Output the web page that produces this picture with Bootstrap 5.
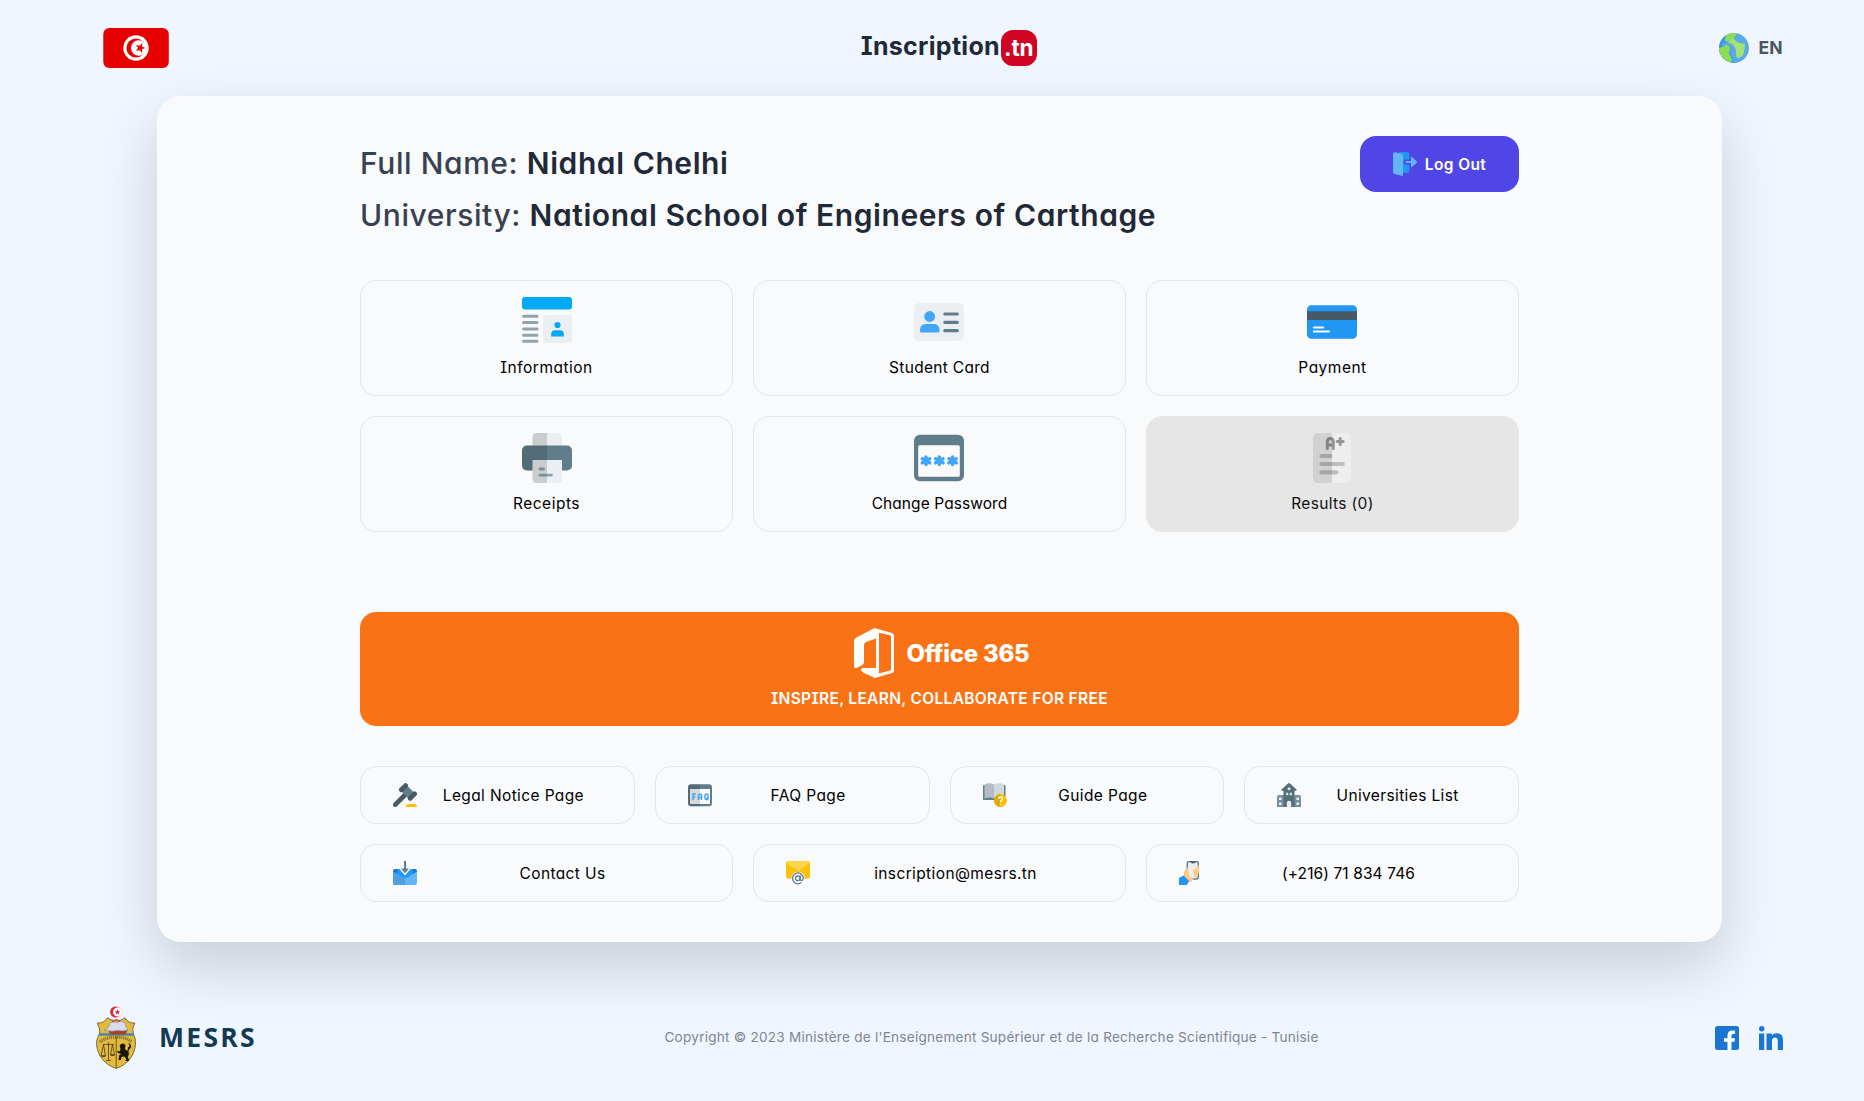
<!DOCTYPE html>
<html lang="en">
<head>
<meta charset="utf-8">
<meta name="viewport" content="width=device-width, initial-scale=1">
<title>Inscription.tn</title>
<link href="https://cdn.jsdelivr.net/npm/bootstrap@5.3.0/dist/css/bootstrap.min.css" rel="stylesheet">
<style>
  body{font-family:Inter,"Open Sans",sans-serif;font-feature-settings:"cv11","cv08";background:#eff6ff;color:#000;height:1101px;overflow:hidden;padding:0 81px 0 96px}
  svg{display:block;flex:none}
  a{color:inherit;text-decoration:none}
  .topbar{height:96px}
  .site-flag{margin-left:7px}
  .brand-name{width:140px;font-size:25px;font-weight:700;line-height:34px;letter-spacing:.3px;color:#1f2937;margin-bottom:4px}
  .brand-badge{width:36px;height:36px;border-radius:12px;background:#d00524;color:#fff;font-size:22.5px;font-weight:700;letter-spacing:-.2px;line-height:35px}
  .brand-block{margin-left:9px}
  .lang-switch{font-size:17.5px;font-weight:700;color:#4b5563;letter-spacing:.3px;gap:9px}
  .panel{height:846px;margin:0 61px;border-radius:24px;background:#f9fafc;padding:40px 203px;box-shadow:0 25px 60px rgba(0,0,0,.165)}
  .intro{height:144px}
  .intro-line{font-size:30px;line-height:52px;font-weight:500;color:#374151;letter-spacing:.58px;white-space:nowrap}
  .intro-line b{font-weight:600;color:#1f2937}
  .logout{width:159px;height:56px;border-radius:16px;background:#4f46e5;color:#fff;font-size:15.5px;font-weight:600;letter-spacing:.4px;gap:8px}
  .logout span,.tile span,.office-title span,.pill span,.intro-line{padding-top:1px}
  .intro-line{height:52px}
  .grid{gap:20px}
  .tile{flex:1 1 0;height:116px;border:1px solid #e5e7eb;border-radius:16px;padding:16px;font-size:15.5px;line-height:24px;letter-spacing:.5px;gap:8px}
  .tile+.tile svg{margin-right:1px}
  .tile-off{background:#e6e6e6;border-color:#e6e6e6;color:#111}
  .office{height:114px;margin:80px 0 40px;border-radius:16px;background:#f97316;color:#fff;padding:16px;gap:8px}
  .office-title{font-size:24px;font-weight:800;letter-spacing:-.25px;gap:13px;margin-left:4px}
  .office-sub{font-size:15.5px;line-height:26px;font-weight:600;letter-spacing:.33px}
  .pill{flex:1 1 0;height:58px;border:1px solid #e5e7eb;border-radius:16px;padding:0 32px;gap:8px;font-size:15.5px;letter-spacing:.38px;white-space:nowrap}
  .tight{letter-spacing:.1px}
  .bottombar{height:159px;padding-top:32px}
  .ministry{width:172px;gap:23px;font-family:"Open Sans",sans-serif;font-weight:700;font-size:26.5px;letter-spacing:2.3px;color:#123a52}
  .copy{font-size:13.6px;color:#80858d;letter-spacing:.225px;white-space:nowrap}
  .socials{gap:20px}
</style>
</head>
<body>
<header class="topbar d-flex justify-content-between align-items-center">
  <svg class="site-flag" width="66" height="40" viewBox="0 0 66 40"><rect x=".3" width="65.500" height="40" rx="6" fill="#e60000"/><circle cx="33" cy="20" r="12.700" fill="#fff"/><circle cx="33" cy="20" r="9.600" fill="#e60000"/><circle cx="35.800" cy="20" r="7.800" fill="#fff"/><path d="M38.600 16.400l-.1 2.600 2.500.9-2.500.9.1 2.700-1.700-2.100-2.600.7 1.500-2.200-1.500-2.200 2.600.8z" fill="#e60000" stroke="#e60000" stroke-width="1.100"/></svg>
  <a href="#" class="brand-block d-flex align-items-center"><span class="brand-name">Inscription</span><span class="brand-badge text-center">.tn</span></a>
  <a href="#" class="lang-switch d-flex align-items-center">
    <svg width="30" height="30" viewBox="0 0 30 30"><defs><clipPath id="globe"><circle cx="15" cy="15" r="15"/></clipPath></defs><g clip-path="url(#globe)"><path d="M0 0h30v30H0z" fill="#5aaae7"/><path d="M0 0h7l1 8 5 4-1 8 4 10H0z" fill="#3f98e2"/><path d="M6 7l1-5 5-2h5.500l-.8 3c-2 2-4 3-6 4.200C9 8.300 6 9.500 6 7zM0 15l3.500-1C5 12 9 11 11 14c1 2-1 4-1 6s3 5 3 7l-.5 3H0z" fill="#8edb57"/><path d="M9 9l5-4.500c3 5 7 6 12 6.500-.2 4-.8 8-2.200 12l-5.300 2.600C16 23 17 20 17 17c-.5-3-3-5-8-5z" fill="#a4e273"/><path d="M3 11c4-2 7-2 9.500 0 3.500 2 4.500 6 4.500 10s2 7 4 9h-6c-1-4-3-7-3.500-10 0-3 1.500-5-.5-7-2-1.700-5-1.200-8 1z" fill="#5aaae7"/></g></svg>
    <span>EN</span></a>
</header>

<main class="panel">
  <div class="intro d-flex justify-content-between align-items-start">
    <div><div class="intro-line">Full Name: <b>Nidhal Chelhi</b></div><div class="intro-line">University: <b>National School of Engineers of Carthage</b></div></div>
    <a href="#" class="logout d-flex align-items-center justify-content-center">
      <svg width="24" height="24" viewBox="0 0 24 24"><path d="M6 0h8.300a2 2 0 0 1 2 2v5.500H13a2.500 2.500 0 0 0 0 5h3.300V19a2 2 0 0 1-2 2H6z" fill="#2196f3"/><path d="M2 .2l6.500 1.600Q10 2.200 10 3.700V24l-8.500-2Q0 21.500 0 20V2Q0 0 2 .2z" fill="#64b5f6"/><path d="M13 9h5V5.500q.2-1 1-.5l4.700 4.300q.6.700 0 1.400L19 15q-.8.500-1-.5V11h-5q-1-1 0-2z" fill="#64b5f6"/></svg>
      <span>Log Out</span></a>
  </div>

  <div class="grid d-flex flex-column">
    <div class="grid d-flex">
      <a href="#" class="tile d-flex flex-column align-items-center">
        <svg width="50" height="50" viewBox="0 0 50 50"><rect width="50" height="12.500" rx="3" fill="#03a9f4"/><path d="M1.500 19.300h13.500M1.500 25.600h13.500M1.500 31.900h13.500M1.500 38.200h13.500M1.500 44.300h13.500" stroke="#90a4ae" stroke-width="3" stroke-linecap="round"/><rect x="21" y="18" width="29" height="28" rx="3" fill="#eceff1"/><circle cx="35.500" cy="28" r="3.100" fill="#03a9f4"/><path d="M29.200 39.500v-2q0-4.200 4-4.200h4.600q4 0 4 4.200v2z" fill="#03a9f4"/></svg>
        <span>Information</span></a>
      <a href="#" class="tile d-flex flex-column align-items-center" style="letter-spacing:.3px">
        <svg width="50" height="50" viewBox="0 0 50 50"><rect y="6" width="50" height="38" rx="5" fill="#eceff1"/><circle cx="15.700" cy="19.500" r="5.400" fill="#42a5f5"/><path d="M6 34v-1.500Q6.500 27 12 27h7.500q5.500 0 6 5.500V34q0 1.500-1.500 1.500H7.500Q6 35.500 6 34z" fill="#42a5f5"/><path d="M30.800 17h12.500M30.800 25.300h12.500M30.800 33.700h12.500" stroke="#607d8b" stroke-width="3.200" stroke-linecap="round"/></svg>
        <span>Student Card</span></a>
      <a href="#" class="tile d-flex flex-column align-items-center">
        <svg width="50" height="50" viewBox="0 0 50 50"><rect y="8.300" width="50" height="33.500" rx="4.500" fill="#2196f3"/><path d="M0 14.300h50V23H0z" fill="#455a64"/><path d="M7 30.500h9M7 34.500h15" stroke="#fff" stroke-width="2.200" stroke-linecap="round"/></svg>
        <span>Payment</span></a>
    </div>
    <div class="grid d-flex">
      <a href="#" class="tile d-flex flex-column align-items-center">
        <svg width="50" height="50" viewBox="0 0 50 50"><rect x="10.500" width="29.500" height="20" rx="4" fill="#eceff1"/><rect y="12.500" width="50" height="25" rx="5" fill="#607d8b"/><path d="M10.500 27H40v19q0 4-4 4H14.500q-4 0-4-4z" fill="#eceff1"/><path d="M18 36h3.500M18 42.200h11.500" stroke="#90a4ae" stroke-width="2.800" stroke-linecap="round"/><path d="M25 0v50H14.500q-4 0-4-4v-8.500H5q-5 0-5-5v-15q0-5 5-5h5.500V4q0-4 4-4z" fill="#000" opacity=".14"/></svg>
        <span>Receipts</span></a>
      <a href="#" class="tile d-flex flex-column align-items-center" style="letter-spacing:.08px">
        <svg width="50" height="50" viewBox="0 0 50 50"><rect y="1.700" width="50" height="46.500" rx="6" fill="#607d8b"/><rect x="4.200" y="12.300" width="41.600" height="31.500" rx="1.500" fill="#fafafa"/><g stroke="#42a5f5" stroke-width="3.500" stroke-linecap="round"><path id="ast" d="M12 24v7.600M8.300 25.800l7.400 4M15.700 25.800l-7.400 4"/><use href="#ast" x="13.300"/><use href="#ast" x="26.600"/></g></svg>
        <span>Change Password</span></a>
      <a href="#" class="tile tile-off d-flex flex-column align-items-center" style="letter-spacing:.35px">
        <svg width="50" height="50" viewBox="0 0 50 50"><rect x="6" width="38" height="50" rx="5" fill="#eee"/><path d="M14.500 23h9M14.500 31h21.200M14.500 39.300h15" stroke="#bdbdbd" stroke-width="4.200" stroke-linecap="round"/><path d="M20.300 15.500V9q0-3.500 3-3.500t3 3.500v6.500M20.300 12h6" stroke="#969696" stroke-width="3" fill="none" stroke-linecap="round"/><path d="M33.200 5.500v6M30.200 8.500h6" stroke="#969696" stroke-width="3" stroke-linecap="round"/><path d="M25 0v50H11q-5 0-5-5V5q0-5 5-5z" fill="#000" opacity=".12"/></svg>
        <span>Results (0)</span></a>
    </div>
  </div>

  <a href="#" class="office d-flex flex-column align-items-center">
    <div class="office-title d-flex align-items-center">
      <svg width="40" height="50" viewBox="0 0 40 50"><path fill="#fff" fill-rule="evenodd" d="M20.500 0L38 5q2 .8 2 3v34.500q0 2-2 2.500l-17 5-12-5.500q-3-2-1-4.500h14V10.500l-10 3.500q-2 .8-2 3v17q0 2-2 3.200l-4.500 2.300Q0 41 0 38V13q0-2 2-3.300zM25 4.800v40.700L36 42.500q1-.4 1-1.500V8.500q0-1-1-1.300z"/></svg>
      <span>Office 365</span></div>
    <div class="office-sub">INSPIRE, LEARN, COLLABORATE FOR FREE</div>
  </a>

  <div class="grid d-flex flex-column">
    <div class="grid d-flex">
      <a href="#" class="pill d-flex align-items-center">
        <svg width="24" height="24" viewBox="0 0 24 24"><path d="M2.300 21.700L12 12" stroke="#455a64" stroke-width="4.600" stroke-linecap="round"/><path d="M8 8l6-5.500 8 8-6 5.500z" fill="#607d8b"/><path d="M8.400 6.800l4.200-4.200M17.200 15.300l4.400-4.400" stroke="#455a64" stroke-width="4.800" stroke-linecap="round"/><path d="M12.800 24q0-3 2.700-3h5.800q2.700 0 2.700 3z" fill="#ffc107"/></svg>
        <span class="flex-fill text-center">Legal Notice Page</span></a>
      <a href="#" class="pill d-flex align-items-center">
        <svg width="24" height="24" viewBox="0 0 24 24"><rect y="1.200" width="24" height="22" rx="3" fill="#607d8b"/><path d="M2 6h20v15H2z" fill="#fafafa"/><path d="M12 1.200v22H3q-3 0-3-3v-16q0-3 3-3z" fill="#000" opacity=".13"/><g fill="none" stroke="#42a5f5" stroke-width="1.500"><path d="M5 17v-6h3M5 14h2.500M10.500 17v-4.500q0-1.500 1.500-1.500t1.500 1.500V17M10.500 14.500h3M17 12.300q0-1.300 1.500-1.300t1.500 1.300v2.900q0 1.300-1.500 1.300T17 15.200zM18.500 15l1.800 2"/></g></svg>
        <span class="flex-fill text-center">FAQ Page</span></a>
      <a href="#" class="pill d-flex align-items-center">
        <svg width="24" height="24" viewBox="0 0 24 24"><path d="M0 3q0-1 1-1h20.500q1 0 1 1v14H0z" fill="#607d8b"/><path d="M1.500 1.500Q6-1 11 1.500v14Q6 13.500 1.500 15.500z" fill="#b3bcc2"/><path d="M11 1.500q5-2.500 10 0v14q-5-2-10 0z" fill="#cfd8dc"/><circle cx="17.500" cy="17.500" r="6.500" fill="#ffc107"/><path d="M17.500 11a6.500 6.500 0 0 0 0 13z" fill="#dfa906"/><path d="M15.700 15.700q0-1.700 1.800-1.700t1.800 1.600-1.800 2.900v.8M17.500 20.700v1.100" fill="none" stroke="#fff" stroke-width="1.400"/></svg>
        <span class="flex-fill text-center">Guide Page</span></a>
      <a href="#" class="pill d-flex align-items-center">
        <svg width="24" height="24" viewBox="0 0 24 24"><path d="M0 14q0-2 2-2h20q2 0 2 2v10H0z" fill="#78909c"/><path d="M6.500 8L4.500 7.500Q4 6.500 5 6l6-5.500q1-.8 2 0L19 6q1 .5.500 1.500L17.500 8v16h-11z" fill="#546e7a"/><circle cx="12" cy="5.700" r="1.500" fill="#dfe5e8"/><path d="M9.200 9.800h2v2.400h-2zM12.800 9.800h2v2.400h-2zM9.800 24v-4.500q0-1.800 2.200-1.800t2.200 1.800V24zM2 14.500h2.500V17H2zM2 19.500h2.500V22H2zM19.500 14.500H22V17h-2.500zM19.500 19.500H22V22h-2.500z" fill="#eceff1"/></svg>
        <span class="flex-fill text-center">Universities List</span></a>
    </div>
    <div class="grid d-flex">
      <a href="#" class="pill d-flex align-items-center">
        <svg width="24" height="24" viewBox="0 0 24 24"><path d="M0 10q0-2 2-2h20q2 0 2 2v4L12 21 0 14z" fill="#1976d2"/><path d="M4 8h16v5l-8 5-8-5z" fill="#2196f3"/><path d="M6.500 8h11l-5.500 6.500z" fill="#f9fafc"/><path d="M0 10.500L9 16q3 1.700 6 0l9-5.500V22q0 2-2 2H2q-2 0-2-2z" fill="#64b5f6"/><path d="M0 10.500L9 16q1.500.9 3 .9V24H2q-2 0-2-2z" fill="#4f9fe0"/><path d="M12 0v9" stroke="#607d8b" stroke-width="2"/><path d="M8 7.500h8l-3.300 4q-.7.700-1.400 0z" fill="#607d8b"/></svg>
        <span class="flex-fill text-center">Contact Us</span></a>
      <a href="#" class="pill d-flex align-items-center">
        <svg width="24" height="24" viewBox="0 0 24 24"><rect width="24" height="17.500" rx="2" fill="#ffc107"/><path d="M0 2q0-2 2-2h20q2 0 2 2L13.500 9q-1.500.9-3 0z" fill="#ffd54f"/><path d="M4 17.500L12 9.500l8 8z" fill="#ff9800"/><circle cx="12" cy="17.300" r="6.700" fill="#f9fafc"/><circle cx="11.800" cy="17.300" r="2.300" fill="none" stroke="#607d8b" stroke-width="1.300"/><path d="M14.200 14.800v3.500q.3 1.300 1.600 1.200 1.500-.4 1.500-2.200a5.400 5.400 0 1 0-2.300 4.500" fill="none" stroke="#607d8b" stroke-width="1.300" stroke-linecap="round"/></svg>
        <span class="flex-fill text-center">inscription@mesrs.tn</span></a>
      <a href="#" class="pill tight d-flex align-items-center">
        <svg width="24" height="24" viewBox="0 0 24 24"><path d="M9 6.500Q5 9 5 13.500v4l4.500 4q3-1 5-4z" fill="#ffb74d"/><rect x="8.300" y=".5" width="11" height="17.500" rx="2" fill="#eceff1" stroke="#607d8b" stroke-width="1.400"/><path d="M11 .5h6q-.5 2-3 2t-3-2z" fill="#455a64"/><path d="M8.500 6q1.500 4 1.500 8l3 3.500h2.500L11 21l-5-3V12zM14 10q1-2.500 3-2.500l2-3.500q1.700.3 1 3 .5 4-1 6.500-1 3-3.500 3z" fill="#ffcc80"/><path d="M0 17l4.500-2.500 5.500 5.300L8 24H0z" fill="#2196f3"/></svg>
        <span class="flex-fill text-center">(+216) 71 834 746</span></a>
    </div>
  </div>
</main>

<footer class="bottombar d-flex justify-content-between align-items-center">
  <div class="ministry d-flex align-items-center">
    <svg width="40" height="63" viewBox="0 0 40 63"><circle cx="20.500" cy="6" r="6.600" fill="#fbe3e8"/><circle cx="19.500" cy="6" r="5.400" fill="#e3203c"/><circle cx="21.300" cy="6" r="4.400" fill="#fff"/><path d="M21.500 3.300l.8 1.900 2 .1-1.600 1.300.6 2-1.800-1.100-1.700 1.100.5-2-1.600-1.300 2-.1z" fill="#e3203c"/><path d="M1.200 17Q8 17.500 11.500 11.800q5.500 4 9 1.700 3.500 2.300 8.500-1.700Q32 17.500 38.800 17q-3.600 6-1.300 11 2.500 5 2 10.500C38.500 49 32 58.500 20.200 62.500 8 58.500 1.500 49 .6 38.500.1 33 3.500 28 3.500 27.500 4.800 24 1.200 17 1.200 17z" fill="#e2bb3b" stroke="#5d4c23" stroke-width=".8"/><path d="M3.300 27.300h34l.6 2.400H2.700z" fill="#4a83ba"/><path d="M12 23h20q-2 5.500-4 5.500H15q-2-1-3-5.500z" fill="#a54420"/><path d="M8 24q5-1 6-7 4-2 7-.5 4-2.500 8 0 0 4 3 7.500-5 1.500-10 .5-7 1.500-14-.5z" fill="#d8dcec" stroke="#7d84a3" stroke-width=".6"/><path d="M16 15.500q5-2 8 0" stroke="#c04232" stroke-width="1" fill="none"/><path d="M4 36q7-5.500 16-4.500 9-1 16 4.500" stroke="#8b7432" stroke-width="3" stroke-dasharray="1.200 .8" fill="none"/><path d="M20.200 30v32" stroke="#5d4c23" stroke-width=".9"/><path d="M12.500 36v18M7 38.500h11M10 54.500h5M7.500 38.500L5 50h4.500zM16.500 38.500L14.500 49h4z" stroke="#4a3b17" stroke-width=".8" fill="none"/><path d="M5 49.500h5q-2.500 3-5 0zM14 48.500h5q-2.500 3-5 0z" fill="#4a3b17"/><path d="M23.500 40q1-3 4-2.500l2 1.500-.5 4 2.500 2 .5-3.500q3-2-.2-4.500 4 .5 3 4.500l-2.300 3 .3 4-1 2.500 1.500 4h-4l1-1.500-1.800-3-3.200.5-.3 3h-2.500l.8-5 2-1-3.300-1-1-2 3 .2.500-3z" fill="#1b160b"/></svg>
    <span>MESRS</span></div>
  <div class="copy">Copyright © 2023 Ministère de l'Enseignement Supérieur et de la Recherche Scientifique - Tunisie</div>
  <div class="socials d-flex">
    <svg width="24" height="24" viewBox="0 0 24 24"><rect width="24" height="24" rx="2.500" fill="#1976d2"/><path d="M12.500 24v-8.300H9v-3.500h3.500V9.500q0-5 5-5H20V8h-2q-1.500 0-1.500 1.500v2.700H20l-.5 3.500h-3V24z" fill="#fff"/></svg>
    <svg width="24" height="24" viewBox="0 0 24 24" fill="#1976d2"><circle cx="2.700" cy="2.700" r="2.700"/><path d="M0 7.500h5.200V24H0zM7.500 7.500h5.300v2q1.500-2.300 5-2.300Q24 7.200 24 14v10h-5.200v-9q0-3.500-2.800-3.500-3 0-3 3.500v9H7.500z"/></svg>
  </div>
</footer>
<script src="https://cdn.jsdelivr.net/npm/bootstrap@5.3.0/dist/js/bootstrap.bundle.min.js"></script>
</body>
</html>
